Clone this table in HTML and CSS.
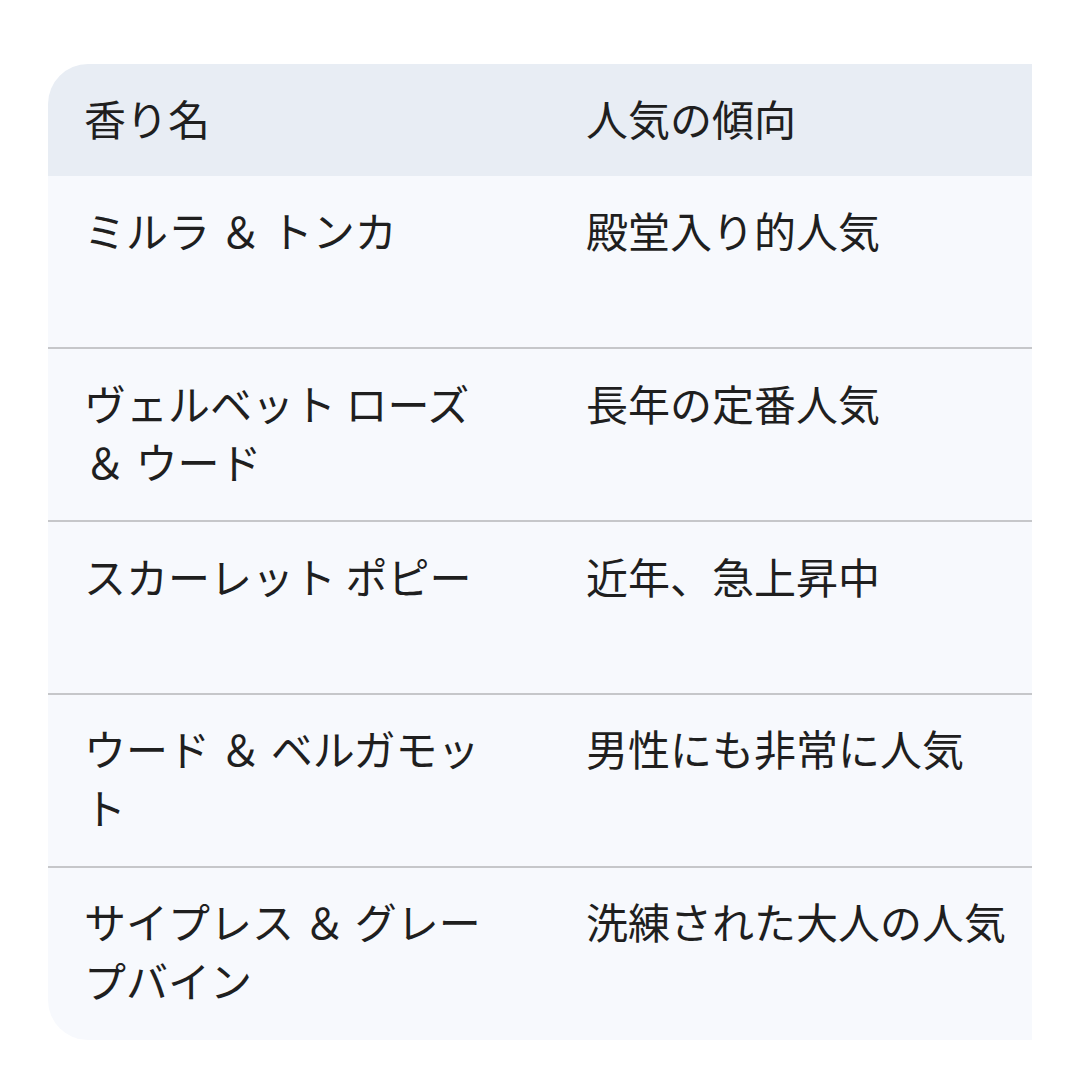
FILE: index.html
```html
<!DOCTYPE html>
<html lang="ja">
<head>
<meta charset="utf-8">
<link rel="stylesheet" href="styles.css">
</head>
<body>
<div class="wrap">
  <table class="tbl">
    <thead>
      <tr><th class="c1">香り名</th><th class="c2">人気の傾向</th></tr>
    </thead>
    <tbody>
      <tr><td>ミルラ ＆ トンカ</td><td>殿堂入り的人気</td></tr>
      <tr><td>ヴェルベット ローズ ＆ ウード</td><td>長年の定番人気</td></tr>
      <tr><td>スカーレット ポピー</td><td>近年、急上昇中</td></tr>
      <tr><td>ウード ＆ ベルガモット</td><td>男性にも非常に人気</td></tr>
      <tr><td>サイプレス ＆ グレープバイン</td><td>洗練された大人の人気</td></tr>
    </tbody>
  </table>
</div>
</body>
</html>
```
FILE: styles.css
```css
html, body {
  margin: 0;
  padding: 0;
  background: #ffffff;
}
body {
  font-family: "Noto Sans CJK JP", "Noto Sans", sans-serif;
  color: #1f1f1f;
}
.wrap {
  margin: 64px 0 0 48px;
  width: 984px;
  overflow: hidden;
  border-radius: 40px 0 0 40px;
}
.tbl {
  width: 1100px;
  border-collapse: collapse;
  table-layout: fixed;
  font-size: 42px;
  line-height: 58.4px;
}
.tbl th, .tbl td {
  text-align: left;
  vertical-align: top;
  font-weight: 400;
  padding: 24.5px 36px 29.5px 36px;
}
.tbl th.c1 {
  width: 420px;
  padding-right: 46px;
}
.tbl tbody td:first-child {
  padding-right: 46px;
}
.tbl thead tr {
  background: #e8edf4;
}
.tbl tbody tr {
  background: #f7f9fd;
  border-bottom: 2.5px solid #c6c7ca;
}
.tbl tbody tr:last-child {
  border-bottom-color: #f7f9fd;
}
.tbl tbody td {
  height: 116.8px;
}
```
